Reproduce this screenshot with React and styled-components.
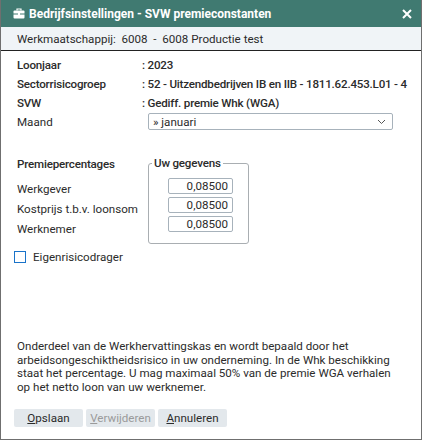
import React from "react";
import styled, { createGlobalStyle } from "styled-components";

const GlobalStyle = createGlobalStyle`
  body {
    margin: 0;
    background: #fff;
    font-family: Roboto, "Liberation Sans", sans-serif;
    font-size: 11.6px;
    color: #2b2b2b;
  }
`;

const Window = styled.div`
  width: 420px;
  height: 439px;
  border: 1px solid #6f6f6f;
  border-top: none;
  display: flex;
  flex-direction: column;
  background: #fff;
  > * {
    flex-shrink: 0;
  }
`;

const TitleBar = styled.div`
  height: 27px;
  background: #407a71;
  color: #fff;
  display: flex;
  align-items: center;
  padding: 0 9px 0 12px;
  font-weight: bold;
  font-size: 12px;
`;

const Title = styled.span`
  flex: 1;
  margin-left: 4px;
`;

const Close = styled.span`
  display: flex;
`;

const InfoBar = styled.div`
  height: 23px;
  background: #f0f4f7;
  border-bottom: 1px solid #222;
  display: flex;
  align-items: center;
  padding-left: 16px;
  white-space: pre;
`;

const Body = styled.div`
  flex: 1;
  display: flex;
  flex-direction: column;
  padding: 4px 16px 12px 16px;
`;

const Row = styled.div`
  display: flex;
  align-items: center;
  height: 19px;
  font-weight: ${({ strong }) => (strong ? 500 : 400)};
  letter-spacing: ${({ strong }) => (strong ? "-0.2px" : "normal")};
`;

const Label = styled.div`
  width: 125px;
  flex-shrink: 0;
`;

const Value = styled.div`
  white-space: nowrap;
`;

const Select = styled.div`
  margin-left: 6px;
  width: 233px;
  height: 15px;
  border: 1px solid #a7b2bb;
  border-radius: 2px;
  display: flex;
  align-items: center;
  padding: 0 6px 0 4px;
  justify-content: space-between;
`;

const Premie = styled.div`
  display: flex;
  align-items: flex-start;
  margin-top: 22px;
`;

const PremieLabels = styled.div`
  width: 131px;
  display: flex;
  flex-direction: column;
  padding-top: 1px;
`;

const PremieLabel = styled.div`
  height: 20px;
  display: flex;
  align-items: center;
  font-weight: ${({ head }) => (head ? 500 : 400)};
  letter-spacing: ${({ head }) => (head ? "-0.2px" : "normal")};
  margin-bottom: ${({ head }) => (head ? 5 : 0)}px;
`;

const Fieldset = styled.fieldset`
  margin: 3px 0 0 0;
  padding: 8px 15px 11px 19px;
  min-width: 0;
  width: 65px;
  border: 1px solid #a9aeb2;
  border-radius: 3px;
  display: flex;
  flex-direction: column;
  gap: 3px;
`;

const Legend = styled.legend`
  padding: 0 2px;
  margin-left: -16px;
  white-space: nowrap;
  font-weight: 500;
  letter-spacing: -0.2px;
`;

const NumInput = styled.div`
  height: 14px;
  border: 1px solid #a7b2bb;
  border-radius: 2px;
  text-align: right;
  padding: 0 4px;
  line-height: 14px;
`;

const CheckRow = styled.label`
  display: flex;
  align-items: center;
  margin-top: 6px;
  margin-left: -3px;
  gap: 7px;
`;

const Box = styled.span`
  width: 10px;
  height: 10px;
  border: 1px solid #1a73c9;
  background: #fff;
`;

const Description = styled.p`
  margin: auto 0 0 0;
  line-height: 13.4px;
  width: 385px;
`;

const Buttons = styled.div`
  display: flex;
  gap: 3px;
  margin-top: 15px;
  margin-left: -3px;
`;

const Button = styled.button`
  width: 69px;
  height: 18px;
  border: none;
  border-radius: 2px;
  background: #e3e8ec;
  font-family: inherit;
  font-size: 11.6px;
  color: ${({ disabled }) => (disabled ? "#9a9a9a" : "#2b2b2b")};
  padding: 0;
`;

const Briefcase = () => (
  <svg width="12" height="11" viewBox="0 0 12 11">
    <path d="M4 2.5V1h4v1.5" stroke="#fff" strokeWidth="1.2" fill="none" />
    <rect x="0.5" y="2.5" width="11" height="8" rx="1" fill="#fff" />
    <rect x="0" y="5.5" width="12" height="1" fill="#407a71" />
    <rect x="5" y="5" width="2" height="2" fill="#fff" />
  </svg>
);

const CloseIcon = () => (
  <svg width="10" height="10" viewBox="0 0 10 10">
    <path d="M1 1l8 8M9 1L1 9" stroke="#fff" strokeWidth="2" />
  </svg>
);

const Chevron = () => (
  <svg width="9" height="6" viewBox="0 0 9 6">
    <path d="M1 1l3.5 3.5L8 1" stroke="#555" strokeWidth="1" fill="none" />
  </svg>
);

export default function App() {
  return (
    <>
      <GlobalStyle />
      <Window>
        <TitleBar>
          <Briefcase />
          <Title>Bedrijfsinstellingen - SVW premieconstanten</Title>
          <Close>
            <CloseIcon />
          </Close>
        </TitleBar>
        <InfoBar>Werkmaatschappij:  6008  -  6008 Productie test</InfoBar>
        <Body>
          <Row strong>
            <Label>Loonjaar</Label>
            <Value>: 2023</Value>
          </Row>
          <Row strong>
            <Label>Sectorrisicogroep</Label>
            <Value>: 52 - Uitzendbedrijven IB en IIB - 1811.62.453.L01 - 4</Value>
          </Row>
          <Row strong>
            <Label>SVW</Label>
            <Value>: Gediff. premie Whk (WGA)</Value>
          </Row>
          <Row>
            <Label>Maand</Label>
            <Select>
              <span>» januari</span>
              <Chevron />
            </Select>
          </Row>
          <Premie>
            <PremieLabels>
              <PremieLabel head>Premiepercentages</PremieLabel>
              <PremieLabel>Werkgever</PremieLabel>
              <PremieLabel>Kostprijs t.b.v. loonsom</PremieLabel>
              <PremieLabel>Werknemer</PremieLabel>
            </PremieLabels>
            <Fieldset>
              <Legend>Uw gegevens</Legend>
              <NumInput>0,08500</NumInput>
              <NumInput>0,08500</NumInput>
              <NumInput>0,08500</NumInput>
            </Fieldset>
          </Premie>
          <CheckRow>
            <Box />
            Eigenrisicodrager
          </CheckRow>
          <Description>
            Onderdeel van de Werkhervattingskas en wordt bepaald door het
            arbeidsongeschiktheidsrisico in uw onderneming. In de Whk beschikking
            staat het percentage. U mag maximaal 50% van de premie WGA verhalen
            op het netto loon van uw werknemer.
          </Description>
          <Buttons>
            <Button><u>O</u>pslaan</Button>
            <Button disabled><u>V</u>erwijderen</Button>
            <Button><u>A</u>nnuleren</Button>
          </Buttons>
        </Body>
      </Window>
    </>
  );
}
